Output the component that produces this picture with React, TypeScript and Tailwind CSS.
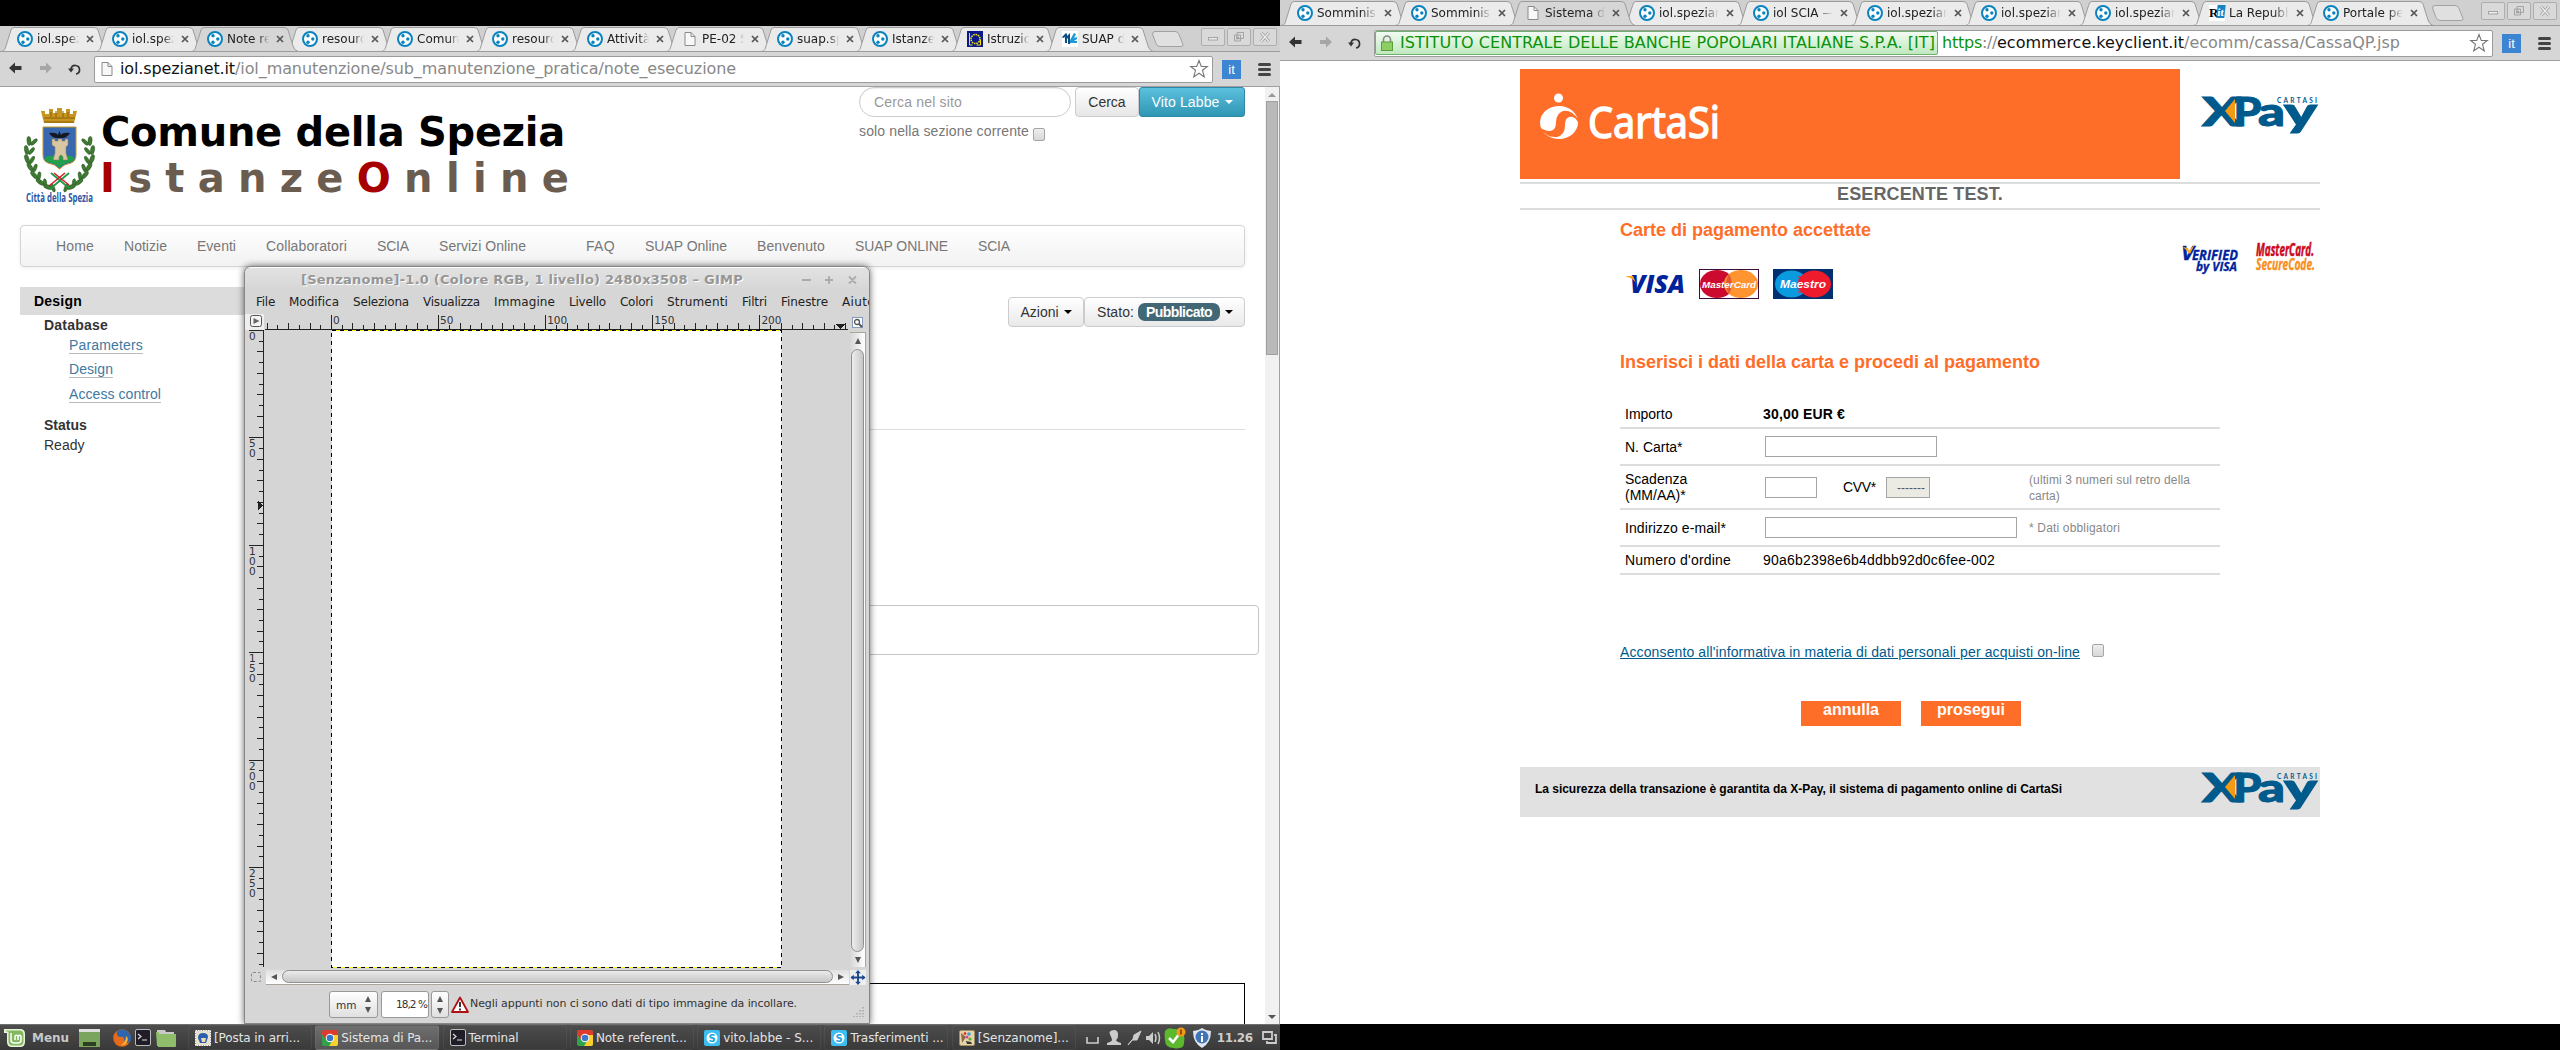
import { useLayoutEffect, useRef, useState, type ReactNode } from "react";

/** Single line of text whose tracking is adjusted so that it spans `w` pixels. */
function Fit({ w, className = "", children }: { w: number; className?: string; children: ReactNode }) {
  const ref = useRef<HTMLSpanElement>(null);
  const [ls, setLs] = useState<number | null>(null);
  useLayoutEffect(() => {
    const el = ref.current;
    if (!el || ls !== null) return;
    const n = (el.textContent || "").length;
    setLs((w - el.getBoundingClientRect().width) / Math.max(1, n));
  }, [w, ls]);
  return (
    <span
      ref={ref}
      className={"inline-block shrink-0 whitespace-nowrap " + className}
      style={ls === null ? undefined : { letterSpacing: ls + "px", width: w }}
    >
      {children}
    </span>
  );
}

/* ---------- browser chrome ---------- */

function PloneIcon() {
  return (
    <svg className="h-4 w-4 shrink-0" viewBox="0 0 16 16">
      <circle cx="8" cy="8" r="7" fill="#fff" stroke="#0b83be" strokeWidth="2" />
      <circle cx="6" cy="4.8" r="1.7" fill="#0b83be" />
      <circle cx="10.8" cy="8" r="1.7" fill="#0b83be" />
      <circle cx="6" cy="11.2" r="1.7" fill="#0b83be" />
    </svg>
  );
}

function PageIcon() {
  return (
    <svg className="h-4 w-4 shrink-0" viewBox="0 0 16 16">
      <path d="M3 1.5h6l4 4v9H3z" fill="#f8f8f8" stroke="#8a8a8a" />
      <path d="M9 1.5v4h4" fill="none" stroke="#8a8a8a" />
    </svg>
  );
}

function EuIcon() {
  return (
    <svg className="h-4 w-4 shrink-0" viewBox="0 0 16 16">
      <rect width="16" height="16" fill="#0a1a8c" />
      <circle cx="8.5" cy="8" r="4.5" fill="none" stroke="#f4e409" strokeWidth="1.6" strokeDasharray="1.5 .8" />
      <path d="M2.500 2v12h3M13.500 14h-4M13.500 14V9" stroke="#f4e409" fill="none" />
    </svg>
  );
}

function SuapIcon() {
  return (
    <svg className="h-4 w-4 shrink-0" viewBox="0 0 16 16">
      <rect width="16" height="16" fill="#fff" />
      <path d="M0 6l4-4 1 1v2l3-3v11H6V7L5 8v4H3V6L1 7z" fill="#0b4f86" />
      <path d="M8 9l4-7 2 1-2 4 3-1v2l-3 2h3v2H8z" fill="#1c9ad6" />
    </svg>
  );
}

function RitIcon() {
  return (
    <span className="flex h-4 w-4 shrink-0 bg-white font-['Liberation_Serif'] text-[13px] font-bold leading-4 text-black">
      R<span className="-ml-px h-[13px] w-[8px] -skew-x-6 bg-[#1583c5] text-center text-[11px] leading-[14px] text-white">it</span>
    </span>
  );
}

const icons = { plone: PloneIcon, page: PageIcon, eu: EuIcon, suap: SuapIcon, rit: RitIcon };
type Tab = { t: string; i?: keyof typeof icons; active?: boolean };

function TabItem({ tab, wide }: { tab: Tab; wide: boolean }) {
  const Icon = icons[tab.i || "plone"];
  const r = wide ? 114 : 95;
  return (
    <div className={"relative flex h-[25px] shrink-0 items-center pl-[17px] " + (wide ? "w-[114px]" : "w-[95px]")}>
      <svg
        className={"absolute left-0 top-0 h-[25px] w-[130px] " + (tab.active ? "z-10" : "")}
        viewBox="0 0 130 25"
      >
        <path
          d={`M1 25.5C5 25 5 23 6 20L11 4Q12 1.5 14 1.5H${r - 1}Q${r + 2} 1.5 ${r + 3} 4L${r + 8} 20Q${r + 9} 24 ${r + 13} 25.5`}
          fill={tab.active ? "#d6d6d6" : "#ebebeb"}
          stroke="#9c9c9c"
        />
      </svg>
      <div className="relative z-20 flex items-center">
        <Icon />
        <div
          className={
            "ml-1 overflow-hidden whitespace-nowrap text-[12px] leading-5 text-[#222] [mask-image:linear-gradient(90deg,#000_75%,transparent)] " +
            (wide ? "w-[60px]" : "w-[42px]")
          }
        >
          {tab.t}
        </div>
        <svg className="ml-[7px] h-2 w-2" viewBox="0 0 8 8">
          <path d="M1 1l6 6M7 1L1 7" stroke="#555" strokeWidth="1.7" />
        </svg>
      </div>
    </div>
  );
}

function WinButton({ children }: { children: ReactNode }) {
  return (
    <div className="flex h-[18px] w-6 items-center justify-center rounded-[2px] border border-[#adadad] bg-[#d9d9d9]">
      <svg className="h-3 w-3" viewBox="0 0 12 12" fill="none" stroke="#a3a3a3">
        {children}
      </svg>
    </div>
  );
}

function Chrome({ tabs, wide, omni, children }: { tabs: Tab[]; wide: boolean; omni: ReactNode; children: ReactNode }) {
  return (
    <div className="flex min-h-0 w-[1280px] flex-1 flex-col overflow-hidden bg-white font-['DejaVu_Sans',sans-serif]">
      <div className="flex h-[25px] shrink-0 bg-[#d0d0d0]">
        <div className="flex w-[1140px]">
          {tabs.map((t, i) => (
            <TabItem key={i} tab={t} wide={wide} />
          ))}
        </div>
        <svg className="ml-[11px] mt-[4px] h-[18px] w-[34px]" viewBox="0 0 34 18">
          <path d="M4 1.500h20q3 0 4 3l4 10q0 2-2 2H9q-3 0-4-3L1.500 4Q1.500 1.500 4 1.500z" fill="#e0e0e0" stroke="#a2a2a2" />
        </svg>
        <div className="ml-[16px] mt-[2px] flex gap-[2px]">
          <WinButton>
            <rect x="1.500" y="6.500" width="9" height="2.500" fill="#eee" />
          </WinButton>
          <WinButton>
            <path d="M4 1.500h6.500v6H4zM1.500 4h6v6h-6zM3.500 6h2v2h-2z" />
          </WinButton>
          <WinButton>
            <path d="M2 1.500l8 9M10 1.500l-8 9" strokeWidth="3" />
            <path d="M2 1.500l8 9M10 1.500l-8 9" stroke="#eee" strokeWidth="1.200" />
          </WinButton>
        </div>
      </div>
      <div className="flex h-[36px] shrink-0 items-center border-b border-t border-b-[#a0a0a0] border-t-[#9c9c9c] bg-[#d6d6d6] pl-[8px]">
        <svg className="-mt-[2px] h-[14px] w-[14px]" viewBox="0 0 14 14">
          <path d="M1 7l6-5.500v3.500h6.500v4H7v3.500z" fill="#333" />
        </svg>
        <svg className="-mt-[2px] ml-[17px] h-[14px] w-[14px]" viewBox="0 0 14 14">
          <path d="M13 7L7 1.500v3.500H1v4h6v3.500z" fill="#a6a6a6" />
        </svg>
        <svg className="-mt-[2px] ml-[14px] h-[15px] w-[15px]" viewBox="0 0 15 15">
          <path d="M4 8a4.300 4.300 0 1 1 5 5" fill="none" stroke="#333" strokeWidth="1.700" />
          <path d="M1 7.500h6L4 11.500z" fill="#333" />
        </svg>
        <div className="ml-[12px] mt-px flex h-[27px] w-[1119px] items-center rounded-[2px] border border-[#9b9b9b] bg-white pb-px text-[16px] leading-[22px] text-[#888]">
          {omni}
          <svg className="ml-auto mr-[3px] h-5 w-5" viewBox="0 0 20 20">
            <path
              d="M10 1.500l2.300 6h6l-4.800 3.800 1.800 6.700-5.300-3.800L4.700 18l1.800-6.700L1.700 7.500h6z"
              fill="#fff"
              stroke="#777"
              strokeWidth="1.100"
            />
          </svg>
        </div>
        <div className="ml-[9px] h-[19px] w-[19px] bg-[#3b85d3] text-center font-['Liberation_Sans',sans-serif] text-[13px] leading-[19px] text-white">it</div>
        <div className="ml-[17px] flex flex-col gap-[2px]">
          <div className="h-[3px] w-[13px] rounded-sm bg-[#444]" />
          <div className="h-[3px] w-[13px] rounded-sm bg-[#444]" />
          <div className="h-[3px] w-[13px] rounded-sm bg-[#444]" />
        </div>
      </div>
      <div className="relative min-h-0 flex-1 overflow-hidden bg-white font-['Liberation_Sans',sans-serif] text-[14px]">{children}</div>
    </div>
  );
}

const Caret = ({ className = "" }: { className?: string }) => (
  <span className={"inline-block border-x-4 border-t-4 border-x-transparent " + className} />
);

const Checkbox = ({ className = "" }: { className?: string }) => (
  <span className={"inline-block h-[13px] w-[12px] rounded-[2px] border border-[#a5a5a5] bg-linear-to-b from-[#eee] to-[#d8d8d8] " + className} />
);

/* ---------- municipality page ---------- */

// One row per leaf pair of the left laurel branch: x, y, outer angle, inner angle.
const leaves = [
  [5, 34, -5, 45], [2.5, 43, -10, 40], [3, 52, -20, 30], [6, 60, -30, 20], [10, 68, -40, 10], [16, 75, -55, -5], [24, 80, -70, -20],
];

function Crest() {
  return (
    <svg className="h-[98px] w-[74px]" viewBox="0 0 74 98">
      <path d="M17 4h4v3h4V2h4v4h4V1h5v5h4V2h4v5h3V4h4l-3 12H20z" fill="#c8961e" />
      <path d="M20 11h31M20 15h30" stroke="#8a5d0c" strokeWidth="1.200" />
      <path d="M27 5v5M32 4v6M39 4v6M44 5v5" stroke="#8a5d0c" />
      <path d="M19 20h33v28q0 6-5 8-7 1-11.500 6Q31 57 24 56q-5-2-5-8z" fill="#3768b0" stroke="#c8961e" />
      <path d="M20.500 51q3-3 8-2q7-3 14 0q5-1 8 2q-1 4-4 4-7 1-11 6Q31 56 24 55q-3-1-3.500-4z" fill="#1fa04a" />
      <path d="M28 32h3v2h3v-2h4v2h3v-2h3v6l-2 2v6l2 7h-5v-3q-2-4-4 0v3h-6l2-7v-6l-3-2z" fill="#d9c7a4" stroke="#8d7c5c" strokeWidth=".6" />
      <path d="M25 26q7-1 9 2l1.500-4 1.500 4q2-3 9-2q-3 5-8 5h-5q-5 0-8-5z" fill="#15191f" />
      <g fill="#3f7a32" stroke="#24521d" strokeWidth=".5">
        {leaves.map(([x, y, a, b]) => (
          <g key={y}>
            <ellipse cx={x} cy={y} rx="2" ry="4.600" transform={`rotate(${a} ${x} ${y})`} />
            <ellipse cx={x + 5} cy={y + 1} rx="1.700" ry="4.200" transform={`rotate(${b} ${x + 5} ${y + 1})`} />
            <ellipse cx={71 - x} cy={y} rx="2" ry="4.600" transform={`rotate(${-a} ${71 - x} ${y})`} />
            <ellipse cx={66 - x} cy={y + 1} rx="1.700" ry="4.200" transform={`rotate(${-b} ${66 - x} ${y + 1})`} />
          </g>
        ))}
      </g>
      <path d="M27 66l18 15M45 66L26 82" stroke="#1f9a46" strokeWidth="1.800" />
      <path d="M30 66l15 12M41 66L25 79" stroke="#d3202d" strokeWidth="1.600" />
      <text x="2" y="95" fontSize="12" fontWeight="bold" fill="#2a57a5" textLength="67" lengthAdjust="spacingAndGlyphs" fontFamily="Open Sans, sans-serif">
        Città della Spezia
      </text>
    </svg>
  );
}

const nav: [string, number, string?][] = [
  ["Home", 38], ["Notizie", 43], ["Eventi", 39], ["Collaboratori", 81], ["SCIA", 32], ["Servizi Online", 87],
  ["FAQ", 29, "ml-[30px]"], ["SUAP Online", 82], ["Benvenuto", 68], ["SUAP ONLINE", 93], ["SCIA", 32],
];

function SpeziaPage() {
  return (
    <>
      <div className="flex h-[138px]">
        <div className="ml-[24px] mt-[20px] w-[76px]">
          <Crest />
        </div>
        <div className="mt-[22px] w-[759px] font-['DejaVu_Sans',sans-serif] text-[40px] font-bold leading-[46px]">
          <div className="pl-px text-black">
            <Fit w={464}>Comune della Spezia</Fit>
          </div>
          <div className="tracking-[13.3px] text-[#6b5c50]">
            <span className="text-[#a60000]">I</span>stanze<span className="text-[#a60000]">O</span>nline
          </div>
        </div>
        <div>
          <div className="flex">
            <div className="h-[30px] w-[212px] rounded-full border border-[#ccc] pl-[14px] leading-[28px] text-[#999] shadow-[inset_0_1px_1px_#0001]">
              <Fit w={88}>Cerca nel sito</Fit>
            </div>
            <div className="ml-[4px] h-[30px] w-[64px] rounded-[4px] border border-[#ccc] bg-linear-to-b from-white to-[#e6e6e6] text-center leading-[28px] text-[#333]">Cerca</div>
            <div className="flex h-[30px] w-[106px] items-center justify-center gap-[5px] rounded-[3px] border border-[#2f88a5] bg-linear-to-b from-[#5bc0de] to-[#2f96b4] text-white">
              <Fit w={68}>Vito Labbe</Fit>
              <Caret />
            </div>
          </div>
          <div className="flex pt-[4px] leading-5 text-[#777]">
            <Fit w={170}>solo nella sezione corrente</Fit>
            <Checkbox className="ml-[4px] mt-[7px]" />
          </div>
        </div>
      </div>
      <div className="ml-[20px] flex h-[42px] w-[1225px] items-center gap-[30px] rounded-[4px] border border-[#d4d4d4] bg-linear-to-b from-white to-[#f2f2f2] pl-[35px] text-[#777] shadow-[0_1px_4px_#0001]">
        {nav.map(([t, w, c], i) => (
          <Fit key={i} w={w} className={c}>
            {t}
          </Fit>
        ))}
      </div>
      <div className="ml-[20px] flex w-[1225px]">
        <div className="w-[230px] pt-[20px] text-[#333]">
          <div className="h-[28px] bg-[#dcdcdc] pl-[14px] font-bold leading-[28px] text-black">
            <Fit w={48}>Design</Fit>
          </div>
          <div className="pl-[24px]">
            <div className="h-[21px] font-bold leading-[20px]">
              <Fit w={64}>Database</Fit>
            </div>
            <div className="flex flex-col items-start pl-[25px] text-[#4079a2]">
              <Fit w={74} className="mb-[6px] h-[18px] border-b border-[#bbb] leading-[18px]">Parameters</Fit>
              <Fit w={44} className="mb-[7px] h-[18px] border-b border-[#bbb] leading-[18px]">Design</Fit>
              <Fit w={92} className="h-[18px] border-b border-[#bbb] leading-[18px]">Access control</Fit>
            </div>
            <div className="mt-[12px] font-bold leading-[20px]">Status</div>
            <div className="leading-[20px]">Ready</div>
          </div>
        </div>
        <div className="flex-1">
          <div className="mt-[30px] flex h-[30px] justify-end text-[#333]">
            <div className="flex w-[76px] items-center justify-center gap-[5px] rounded-[4px] border border-[#ccc] bg-linear-to-b from-white to-[#e9e9e9]">
              <Fit w={38}>Azioni</Fit>
              <Caret className="border-t-black" />
            </div>
            <div className="flex w-[161px] items-center rounded-[4px] border border-[#ccc] bg-linear-to-b from-white to-[#e9e9e9] pl-[12px]">
              <Fit w={37}>Stato:</Fit>
              <span className="ml-[4px] h-[18px] w-[82px] rounded-[7px] bg-[#426775] text-center font-bold leading-[18px] text-white">
                <Fit w={66}>Pubblicato</Fit>
              </span>
              <Caret className="ml-[5px] border-t-black" />
            </div>
          </div>
          <div className="mt-[102px] h-px bg-[#ddd]" />
          <div className="-mr-[14px] mt-[175px] h-[50px] rounded-[4px] border border-[#c4c4c4]" />
          <div className="mt-[328px] h-[60px] border border-black" />
        </div>
      </div>
      <div className="absolute right-0 top-0 flex h-full w-[15px] flex-col items-center border-r border-[#a0a0a0] bg-[#f1f1f1]">
        <span className="mt-[6px] inline-block border-x-4 border-b-4 border-x-transparent border-b-[#999]" />
        <div className="mt-[4px] h-[254px] w-[12px] border border-[#a0a0a0] bg-[#b9b9b9]" />
        <Caret className="mb-[5px] mt-auto border-t-[#555]" />
      </div>
    </>
  );
}

/* ---------- image editor window ---------- */

const menus: [string, number][] = [
  ["File", 19], ["Modifica", 50], ["Seleziona", 56], ["Visualizza", 57], ["Immagine", 61], ["Livello", 37],
  ["Colori", 33], ["Strumenti", 61], ["Filtri", 25], ["Finestre", 47], ["Aiuto", 33],
];

const range = (a: number, b: number) => Array.from({ length: b - a + 1 }, (_, k) => a + k);

function HRuler() {
  return (
    <svg className="h-[16px] w-[586px]" viewBox="0 0 586 16" shapeRendering="crispEdges">
      <path d="M1 15.500H584" stroke="#222" />
      {range(-6, 48).map((k) => {
        const x = Math.round(67 + k * 10.71) + 0.5;
        const top = k % 10 === 0 ? 1 : k % 2 === 0 ? 9 : 11;
        return <path key={k} d={`M${x} ${top}V16`} stroke="#222" />;
      })}
      {[0, 50, 100, 150, 200].map((v) => (
        <text key={v} x={69 + v * 2.142} y="10" fontSize="10.500" fill="#333" fontFamily="DejaVu Sans">
          {v}
        </text>
      ))}
      <path d="M572 10h9l-4.500 5.500z" fill="#222" />
    </svg>
  );
}

function VRuler() {
  return (
    <svg className="h-[638px] w-[19px]" viewBox="0 0 19 638" shapeRendering="crispEdges">
      <path d="M18.500 0V637" stroke="#222" />
      {range(0, 59).map((k) => {
        const y = Math.round(k * 10.74) + 0.5;
        const left = k % 10 === 0 ? 4 : k % 2 === 0 ? 12 : 14;
        return <path key={k} d={`M${left} ${y}H19`} stroke="#222" />;
      })}
      {["0", "50", "100", "150", "200", "250"].map((s, i) =>
        s.split("").map((c, j) => (
          <text key={s + j} x="4" y={10 + i * 107.4 + j * 10} fontSize="10.500" fill="#333" fontFamily="DejaVu Sans">
            {c}
          </text>
        )),
      )}
      <path d="M13 171v9l5-4.500z" fill="#222" />
    </svg>
  );
}

const Tri = ({ d }: { d: string }) => (
  <svg className="h-[8px] w-[8px] shrink-0" viewBox="0 0 8 8">
    <path d={d} fill="#555" />
  </svg>
);
const UP = "M4 1l3 6H1z";
const DOWN = "M4 7l3-6H1z";

function Gimp() {
  return (
    <div className="absolute left-[244px] top-[179px] flex h-[758px] w-[626px] flex-col overflow-hidden rounded-t-[7px] border border-[#868686] bg-[#d6d6d6] font-['DejaVu_Sans',sans-serif] shadow-[0_0_7px_#0009]">
      <div className="flex h-[23px] items-center border-t border-white bg-linear-to-b from-[#e2e2e2] to-[#d6d6d6] pl-[56px] pt-[2px]">
        <Fit w={442} className="text-[13px] font-bold leading-4 text-[#969696] [text-shadow:1px_1px_0_#fff]">[Senzanome]-1.0 (Colore RGB, 1 livello) 2480x3508 – GIMP</Fit>
        <svg className="ml-[58px] h-3 w-[60px]" viewBox="0 0 60 12">
          <path d="M1 6h9M24 6h8M28 2v8M48 2.500l7 7M55 2.500l-7 7" stroke="#ababab" strokeWidth="1.800" />
        </svg>
      </div>
      <div className="flex h-[24px] items-center gap-[14px] pl-[11px] text-[12px] text-[#222]">
        {menus.map(([t, w]) => (
          <Fit key={t} w={w}>
            {t}
          </Fit>
        ))}
      </div>
      <div className="flex h-[16px]">
        <div className="h-[16px] w-[19px] bg-[#eee] pl-[5px] pt-px">
          <svg className="h-[12px] w-[12px]" viewBox="0 0 12 12">
            <rect x=".5" y=".5" width="11" height="11" rx="2" fill="#f4f4f4" stroke="#555" />
            <path d="M3.500 3l6 3-6 3z" fill="#666" />
          </svg>
        </div>
        <HRuler />
        <svg className="ml-[2px] mt-[3px] h-[11px] w-[11px]" viewBox="0 0 11 11">
          <rect x=".5" y=".5" width="10" height="10" fill="#fff" stroke="#204a87" strokeDasharray="1 1" />
          <circle cx="5" cy="5" r="2.500" fill="none" stroke="#555" strokeWidth="1.300" />
          <path d="M7 7l3 3" stroke="#555" strokeWidth="2" />
        </svg>
      </div>
      <div className="flex h-[638px]">
        <VRuler />
        <div className="w-[586px] bg-[#d5d5d5] pl-[67px]">
          <svg className="block h-[638px] w-[451px] bg-white" viewBox="0 0 451 638" shapeRendering="crispEdges">
            <rect x=".5" y=".5" width="450" height="637" fill="none" stroke="#ff0" />
            <rect x=".5" y=".5" width="450" height="637" fill="none" stroke="#000" strokeDasharray="4 4" />
          </svg>
        </div>
        <div className="mt-[2px] flex h-[635px] w-[16px] flex-col items-center border-r border-t border-[#aaa49a] bg-linear-to-r from-[#d6d6d6] to-white pt-[4px]">
          <Tri d={UP} />
          <div className="my-[4px] w-[13px] flex-1 rounded-full border border-[#8f8f8f] bg-linear-to-r from-[#eee] to-[#c6c6c6]" />
          <Tri d={DOWN} />
          <div className="h-[3px]" />
        </div>
      </div>
      <div className="flex h-[18px] items-center">
        <div className="ml-[6px] h-[10px] w-[10px] rounded-[2px] border border-dashed border-[#888]" />
        <div className="ml-[5px] flex h-[15px] w-[583px] items-center gap-[4px] border-b border-[#aaa49a] bg-linear-to-b from-[#e0e0e0] to-white px-[4px]">
          <Tri d="M1 4l6-3v6z" />
          <div className="h-[13px] flex-1 rounded-full border border-[#8f8f8f] bg-linear-to-b from-[#ececec] to-[#c6c6c6]" />
          <Tri d="M7 4L1 1v6z" />
        </div>
        <svg className="ml-px h-[15px] w-[16px] bg-[#eee]" viewBox="0 0 16 16">
          <path d="M8 1v14M1 8h14" stroke="#1a4a8c" strokeWidth="2" />
          <path d="M8 0l3 3.500H5zM8 16l3-3.500H5zM0 8l3.500-3v6zM16 8l-3.500-3v6z" fill="#1a4a8c" />
        </svg>
      </div>
      <div className="flex pl-[84px] pt-[5px] text-[10.5px] leading-[24px] text-[#333]">
        <div className="flex h-[27px] w-[49px] items-center justify-between rounded-[3px] border border-[#999] bg-linear-to-b from-white to-[#e0e0e0] pl-[6px] pr-[5px]">
          mm
          <div>
            <Tri d={UP} />
            <div className="h-[3px]" />
            <Tri d={DOWN} />
          </div>
        </div>
        <div className="ml-[3px] h-[27px] w-[48px] rounded-[3px] border border-[#999] bg-white pr-px text-right">
          <Fit w={31}>18,2 %</Fit>
        </div>
        <div className="ml-[2px] flex h-[27px] w-[18px] flex-col items-center justify-center gap-[4px] rounded-[3px] border border-[#999] bg-linear-to-b from-white to-[#e0e0e0]">
          <Tri d={UP} />
          <Tri d={DOWN} />
        </div>
        <svg className="ml-[2px] mt-[5px] h-[17px] w-[18px]" viewBox="0 0 18 17">
          <path d="M9 1.500L17 16H1z" fill="#fff" stroke="#b01010" strokeWidth="1.800" strokeLinejoin="round" />
          <path d="M9 6v5M9 12.500v2" stroke="#222" strokeWidth="1.800" />
        </svg>
        <Fit w={327} className="ml-[1px] text-[11px] leading-[25px]">Negli appunti non ci sono dati di tipo immagine da incollare.</Fit>
        <svg className="ml-auto mr-[4px] mt-[15px] h-[12px] w-[12px]" viewBox="0 0 12 12">
          <path d="M10 1v10M7 4v7M4 7v4M1 10v1" stroke="#a8a8a8" strokeWidth="1.500" strokeDasharray="1.500 1.500" />
        </svg>
      </div>
    </div>
  );
}

/* ---------- taskbar ---------- */

function ChromeLogo() {
  return (
    <svg className="h-4 w-4" viewBox="0 0 16 16">
      <rect width="16" height="16" rx="2" fill="#2fa34a" />
      <path d="M0 2Q0 0 2 0h12q2 0 2 2v3H8L4 10 0 4z" fill="#dd3b2c" />
      <path d="M8 5h8v9q0 2-2 2H7l4-6z" fill="#fbd02c" />
      <circle cx="8" cy="8" r="4.300" fill="#fff" />
      <circle cx="8" cy="8" r="3.300" fill="#3c78c8" />
    </svg>
  );
}
function TermLogo() {
  return (
    <svg className="h-[17px] w-4" viewBox="0 0 16 17">
      <rect x=".5" y=".5" width="15" height="16" rx="1.500" fill="#201c28" stroke="#bbb" />
      <path d="M3 5l3 2.500L3 10M7 11h5" stroke="#ddd" fill="none" strokeWidth="1.200" />
    </svg>
  );
}
function SkypeLogo() {
  return (
    <svg className="h-4 w-4" viewBox="0 0 16 16">
      <rect width="16" height="16" rx="2" fill="#3dbdf0" />
      <circle cx="8" cy="8" r="5.500" fill="#fff" />
      <text x="8" y="11.500" textAnchor="middle" fontSize="10" fontWeight="bold" fill="#1ba5de" fontFamily="DejaVu Sans">
        S
      </text>
    </svg>
  );
}
function MailLogo() {
  return (
    <svg className="h-4 w-4" viewBox="0 0 16 16">
      <rect x=".5" y=".5" width="15" height="15" fill="#e8e0cc" stroke="#fff" strokeDasharray="1.500 1" />
      <path d="M3 8q0-5 5-5t5 4l-2 6H5z" fill="#2a5fb0" />
      <path d="M6 8h5l-1 4H7z" fill="#f0d8b0" />
    </svg>
  );
}
function GimpLogo() {
  return (
    <svg className="h-4 w-4" viewBox="0 0 16 16">
      <rect x=".5" y=".5" width="15" height="15" rx="1.500" fill="#e6d3a8" stroke="#a08e64" />
      <path d="M2 3l5 4-4 6z" fill="#8a6a48" />
      <circle cx="10" cy="4" r="1.800" fill="#3aa0d8" />
      <circle cx="8" cy="7" r="1.500" fill="#e040a0" />
      <circle cx="11" cy="9" r="1.600" fill="#5a3" />
      <path d="M7 11l5 1 1 2H8z" fill="#333" />
      <circle cx="6" cy="3.500" r="1.300" fill="#d22" />
    </svg>
  );
}

const tasks: [() => ReactNode, string, number, boolean?][] = [
  [MailLogo, "[Posta in arri...", 86],
  [ChromeLogo, "Sistema di Pa...", 91, true],
  [TermLogo, "Terminal", 50],
  [ChromeLogo, "Note referent...", 91],
  [SkypeLogo, "vito.labbe - S...", 90],
  [SkypeLogo, "Trasferimenti ...", 93],
  [GimpLogo, "[Senzanome]...", 91],
];

function Taskbar() {
  return (
    <div className="flex h-[26px] shrink-0 items-center border-t border-[#707070] bg-linear-to-b from-[#4d4d4d] to-[#393939] font-['DejaVu_Sans',sans-serif] text-[12px] text-[#e4e4e4]">
      <svg className="ml-[4px] h-[19px] w-[21px]" viewBox="0 0 21 19">
        <path d="M0 1h16q5 0 5 5v8q0 5-5 5H8q-5 0-5-5V5H0z" fill="#e8f3dc" />
        <path d="M2 2.500h13.500q4 0 4 4v7q0 4-4 4H8.500q-4 0-4-4V3.500H2z" fill="#83b95e" />
        <path d="M7 5v7q0 3 3 3h4q3 0 3-3V9q0-1.700-1.500-1.700T14 9v3M14 9q0-1.700-1.500-1.700T11 9v3" fill="none" stroke="#fff" strokeWidth="1.500" />
      </svg>
      <Fit w={37} className="ml-[7px] font-bold text-[#c8c8c8]">Menu</Fit>
      <svg className="ml-[10px] h-[18px] w-[21px]" viewBox="0 0 21 18">
        <rect width="21" height="18" fill="#7ba45e" />
        <rect width="21" height="3" fill="#ddd" />
        <rect x="4" y="13" width="13" height="4" fill="#2c4021" />
      </svg>
      <svg className="ml-[13px] h-[18px] w-[18px]" viewBox="0 0 18 18">
        <circle cx="9" cy="9" r="8.800" fill="#e66a1a" />
        <path d="M4 2q7-4 12 2t-1 10q-4-1-4-4t-5-2q-3-2-2-6z" fill="#2c66b0" />
        <path d="M13 7q3 2 1 6t-6 3q5-3 5-9z" fill="#f9b233" />
      </svg>
      <div className="ml-[4px]">
        <TermLogo />
      </div>
      <svg className="ml-[5px] h-[18px] w-[20px]" viewBox="0 0 20 18">
        <path d="M1 1h8l1 2h8v5H1z" fill="#c9c9c9" />
        <path d="M0 3h3v14H1zM2 5h18v12q0 1-1 1H2z" fill="#8fbd6b" />
      </svg>
      <div className="ml-[12px] flex gap-[3.3px]">
        {tasks.map(([Icon, t, w, on]) => (
          <div
            key={t}
            className={
              "flex h-[25px] w-[124px] items-center rounded-[3px] border border-white/5 pl-[6px] " +
              (on ? "bg-linear-to-b from-[#6f6f6f] to-[#565656]" : "")
            }
          >
            <Icon />
            <Fit w={w} className="ml-[3px]">
              {t}
            </Fit>
          </div>
        ))}
      </div>
      <svg className="ml-[9px] h-[22px] w-[128px]" viewBox="0 0 128 22">
        <path d="M2 10v6h11v-6" fill="none" stroke="#ccc" strokeWidth="1.600" />
        <path d="M29 3q4 0 4 4.500T31 13q0 1.500 5 3v2H22v-2q5-1.500 5-3T25 7.500T29 3z" fill="#ccc" />
        <path d="M43 18l4-5 5 0 4-9-7 4-1 4z" fill="#ccc" stroke="#ccc" />
        <path d="M61 9h3l4-4v12l-4-4h-3z" fill="#ccc" />
        <path d="M70 7q2 4 0 8M73 5q3 6 0 12" fill="none" stroke="#ccc" strokeWidth="1.500" />
        <path d="M80 4q3-4 8-2 11-1 11 7 1 3 0 7 0 5-5 5-3 1-5 0-9 0-9-8-1-5 0-9z" fill="#5cb82c" />
        <path d="M84 11l4 4 7-9" fill="none" stroke="#fff" strokeWidth="2.500" />
        <circle cx="96" cy="5" r="4.500" fill="#f39a1b" />
        <path d="M96 2.500v5" stroke="#6b3a00" strokeWidth="1.500" />
        <path d="M117 1q4 3 9 3 0 12-9 17-9-5-9-17 5 0 9-3z" fill="#dfe6ee" />
        <circle cx="117" cy="10" r="6.500" fill="#3f74b8" />
        <path d="M117 6v2M117 9v6" stroke="#fff" strokeWidth="2" />
      </svg>
      <Fit w={36} className="ml-[4px] font-bold text-[#ccc]">11.26</Fit>
      <svg className="ml-[9px] h-[14px] w-[15px]" viewBox="0 0 15 14" fill="none" stroke="#ccc" strokeWidth="1.800">
        <path d="M1 1h9v7H1zM12 4h2v8H5v-2" />
      </svg>
    </div>
  );
}

/* ---------- payment page ---------- */

function XPay({ className = "" }: { className?: string }) {
  return (
    <svg
      className={"h-[42px] w-[117px] overflow-visible " + className}
      viewBox="0 0 117 42"
      fontFamily="Lato, sans-serif"
      fontWeight="900"
      fontSize="40"
      fill="#005a8c"
      stroke="#005a8c"
      strokeWidth="1"
    >
      <text x="1" y="30" textLength="39" lengthAdjust="spacingAndGlyphs">X</text>
      <path d="M34 3v24l-10-12z" fill="#f39b12" stroke="none" />
      <text x="32.500" y="30" textLength="28" lengthAdjust="spacingAndGlyphs">P</text>
      <text x="57" y="30" textLength="27" lengthAdjust="spacingAndGlyphs">a</text>
      <text x="83" y="30" textLength="33" lengthAdjust="spacingAndGlyphs">y</text>
      <text x="76" y="6.500" fontSize="6.500" strokeWidth="0" fontWeight="700" textLength="40">CARTASI</text>
    </svg>
  );
}

const rowCls = "flex shrink-0 items-center border-b-2 border-[#ddd] pl-[5px]";
const inputCls = "h-[21px] border border-[#a5a5a5] bg-white";

function PaymentPage() {
  return (
    <div className="ml-[240px] w-[800px] pt-[8px] text-black">
      <div className="flex h-[110px]">
        <div className="w-[660px] bg-[#ff6e29]">
          <svg className="ml-[19px] mt-[24px] h-[50px] w-[190px]" viewBox="0 0 190 50">
            <circle cx="19.500" cy="5" r="4.500" fill="#fff" />
            <ellipse cx="20" cy="29.500" rx="19" ry="16.500" fill="#fff" />
            <path d="M0 34q9 6 14 3 3-2 3-8 0-8 7-11 8-2 16 9l3-6-3 10q-4-9-10-7-4 1-4 8 0 10-8 12Q7 45 0 34z" fill="#ff6e29" />
            <text x="49" y="45" fontSize="43" fill="#fff" stroke="#fff" strokeWidth="1.400" fontFamily="Noto Sans, sans-serif" textLength="132" lengthAdjust="spacingAndGlyphs">
              CartaSi
            </text>
          </svg>
        </div>
        <XPay className="ml-[21px] mt-[27px]" />
      </div>
      <div className="mt-[3px] h-[28px] border-y-2 border-[#ddd] text-center text-[18px] font-bold leading-[20px] text-[#666]">
        <Fit w={166}>ESERCENTE TEST.</Fit>
      </div>
      <div className="flex justify-between pl-[100px]">
        <div>
          <div className="mt-[8px] text-[18px] font-bold leading-[24px] text-[#ff6e29]">
            <Fit w={251}>Carte di pagamento accettate</Fit>
          </div>
          <div className="mt-[27px] flex h-[30px] gap-[14px]">
            <svg className="ml-[4px] h-[30px] w-[61px]" viewBox="0 0 61 30">
              <text x="6" y="24" fontSize="25" fontWeight="800" fontStyle="italic" fill="#00239c" fontFamily="Open Sans, sans-serif" textLength="55" lengthAdjust="spacingAndGlyphs">
                VISA
              </text>
              <path d="M1 7h8l3 7Q9 9 1 7z" fill="#f7a21b" />
            </svg>
            <svg className="h-[30px] w-[60px]" viewBox="0 0 60 30">
              <rect x=".5" y=".5" width="59" height="29" fill="#fff" stroke="#3c0d3c" />
              <ellipse cx="18" cy="15" rx="17" ry="14" fill="#cc0a2f" />
              <ellipse cx="42" cy="15" rx="17" ry="14" fill="#ff9430" />
              <path d="M30 5q6 10 0 20-6-10 0-20z" fill="#e25a2c" />
              <text x="3" y="18.500" fontSize="9" fontWeight="bold" fontStyle="italic" fill="#fff" fontFamily="Liberation Sans" textLength="54" lengthAdjust="spacingAndGlyphs">
                MasterCard
              </text>
            </svg>
            <svg className="h-[30px] w-[60px]" viewBox="0 0 60 30">
              <rect width="60" height="30" fill="#003070" />
              <ellipse cx="18.500" cy="15" rx="16.500" ry="13.500" fill="#0a9ae0" />
              <ellipse cx="41.500" cy="15" rx="16.500" ry="13.500" fill="#f01a2d" />
              <path d="M25 8h9M25 11h9M25 20h9M25 23h8" stroke="#f01a2d" />
              <text x="7" y="18.500" fontSize="10" fontWeight="bold" fontStyle="italic" fill="#fff" fontFamily="Liberation Sans" textLength="46" lengthAdjust="spacingAndGlyphs">
                Maestro
              </text>
            </svg>
          </div>
        </div>
        <svg className="mr-[2px] mt-[33px] h-[34px] w-[136px] overflow-visible" viewBox="0 0 136 34" fontWeight="bold" fontStyle="italic" fontFamily="Open Sans, sans-serif">
          <g fill="#00239c" stroke="#00239c" strokeWidth=".3">
            <text x="-1" y="17" fontSize="19" textLength="13" lengthAdjust="spacingAndGlyphs">V</text>
            <text x="10" y="17" fontSize="15" textLength="46" lengthAdjust="spacingAndGlyphs">ERIFIED</text>
            <text x="14" y="28" fontSize="12.500" textLength="41" lengthAdjust="spacingAndGlyphs">by VISA</text>
          </g>
          <path d="M1 4l5 1 1 3 6-7-5 10z" fill="#f7a21b" />
          <text x="74" y="13" fontSize="17" fill="#cc0a1f" stroke="#cc0a1f" strokeWidth=".5" textLength="58" lengthAdjust="spacingAndGlyphs">MasterCard.</text>
          <text x="74" y="27" fontSize="16" fill="#f78f1e" stroke="#f78f1e" strokeWidth=".4" textLength="59" lengthAdjust="spacingAndGlyphs">SecureCode.</text>
        </svg>
      </div>
      <div className="pl-[100px] pr-[100px]">
        <div className="mt-[51px] text-[18px] font-bold leading-[24px] text-[#ff6e29]">
          <Fit w={420}>Inserisci i dati della carta e procedi al pagamento</Fit>
        </div>
        <div className="mt-[26px] flex flex-col leading-[16px]">
          <div className={rowCls + " h-[29px]"}>
            <div className="w-[138px]">Importo</div>
            <Fit w={82} className="font-bold">30,00 EUR €</Fit>
          </div>
          <div className={rowCls + " h-[37px]"}>
            <div className="w-[140px]">N. Carta*</div>
            <div className={inputCls + " w-[172px]"} />
          </div>
          <div className={rowCls + " h-[44px]"}>
            <div className="w-[140px]">
              Scadenza
              <br />
              (MM/AA)*
            </div>
            <div className={inputCls + " w-[52px]"} />
            <Fit w={33} className="ml-[26px]">CVV*</Fit>
            <div className="ml-[10px] h-[21px] w-[44px] border border-[#a5a5a5] bg-[#ebeae3] pl-[10px] text-[12px] leading-[21px] text-[#555]">
              <Fit w={28}>-------</Fit>
            </div>
            <div className="ml-[99px] w-[180px] pt-px text-[12px] text-[#888]">
              <Fit w={161}>(ultimi 3 numeri sul retro della</Fit>
              <br />
              carta)
            </div>
          </div>
          <div className={rowCls + " h-[37px]"}>
            <div className="w-[140px]">
              <Fit w={101}>Indirizzo e-mail*</Fit>
            </div>
            <div className={inputCls + " w-[252px]"} />
            <Fit w={91} className="ml-[12px] text-[12px] text-[#888]">* Dati obbligatori</Fit>
          </div>
          <div className={rowCls + " h-[28px]"}>
            <div className="w-[138px]">
              <Fit w={106}>Numero d'ordine</Fit>
            </div>
            <Fit w={232}>90a6b2398e6b4ddbb92d0c6fee-002</Fit>
          </div>
        </div>
        <div className="mt-[67px] flex leading-[20px] text-[#005a8c]">
          <Fit w={460} className="underline">Acconsento all'informativa in materia di dati personali per acquisti on-line</Fit>
          <Checkbox className="ml-[12px] mt-[2px]" />
        </div>
        <div className="mt-[39px] flex gap-[20px] pl-[181px] text-center text-[16px] font-bold leading-[18px] text-white">
          <div className="h-[25px] w-[100px] bg-[#ff6e29]">
            <Fit w={56}>annulla</Fit>
          </div>
          <div className="h-[25px] w-[100px] bg-[#ff6e29]">
            <Fit w={68}>prosegui</Fit>
          </div>
        </div>
      </div>
      <div className="mt-[41px] flex h-[50px] bg-[#e1e1e1] pl-[15px] text-[12px] font-bold">
        <Fit w={527} className="leading-[44px]">La sicurezza della transazione è garantita da X-Pay, il sistema di pagamento online di CartaSi</Fit>
        <XPay className="ml-[139px] mt-[5px]" />
      </div>
    </div>
  );
}

const leftTabs: Tab[] = [
  { t: "iol.spezianet" }, { t: "iol.spezianet" }, { t: "Note referente", active: true }, { t: "resources" }, { t: "Comune" }, { t: "resources" },
  { t: "Attività" }, { t: "PE-02 SUAP", i: "page" }, { t: "suap.spezia" }, { t: "Istanze" }, { t: "Istruzioni", i: "eu" }, { t: "SUAP della", i: "suap" },
];
const rightTabs: Tab[] = [
  { t: "Somministra" }, { t: "Somministra" }, { t: "Sistema di P", i: "page", active: true }, { t: "iol.spezianet" }, { t: "iol SCIA — A" },
  { t: "iol.spezianet" }, { t: "iol.spezianet" }, { t: "iol.spezianet" }, { t: "La Repubblica", i: "rit" }, { t: "Portale per" },
];

export default function App() {
  return (
    <div className="flex h-[1050px] w-[2560px] overflow-hidden bg-black">
      <div className="flex h-[1050px] w-[1280px] flex-col pt-[26px]">
        <Chrome
          wide={false}
          tabs={leftTabs}
          omni={
            <>
              <div className="ml-[4px] mr-[5px]">
                <PageIcon />
              </div>
              <Fit w={115} className="text-[#111]">iol.spezianet.it</Fit>
              <Fit w={501}>/iol_manutenzione/sub_manutenzione_pratica/note_esecuzione</Fit>
            </>
          }
        >
          <SpeziaPage />
          <Gimp />
        </Chrome>
        <Taskbar />
      </div>
      <div className="flex h-[1024px] w-[1280px] flex-col">
        <Chrome
          wide
          tabs={rightTabs}
          omni={
            <>
              <div className="mr-[4px] flex h-[24px] w-[563px] items-center rounded-[2px] border border-[#6fb06f] bg-linear-to-b from-[#f2fbf2] to-[#bfe8bf] text-[#0b920b]">
                <svg className="ml-[5px] mr-[7px] h-[16px] w-[12px]" viewBox="0 0 12 16">
                  <path d="M2.500 8V4.500a3.500 3.500 0 0 1 7 0V8" fill="none" stroke="#888" strokeWidth="1.600" />
                  <rect x=".5" y="7" width="11" height="8.500" fill="#8ccf62" stroke="#5d9c3c" />
                </svg>
                <Fit w={535}>ISTITUTO CENTRALE DELLE BANCHE POPOLARI ITALIANE S.P.A. [IT]</Fit>
              </div>
              <Fit w={40} className="text-[#0b920b]">https</Fit>
              <Fit w={15}>://</Fit>
              <Fit w={187} className="text-[#111]">ecommerce.keyclient.it</Fit>
              <Fit w={216}>/ecomm/cassa/CassaQP.jsp</Fit>
            </>
          }
        >
          <PaymentPage />
        </Chrome>
      </div>
    </div>
  );
}
